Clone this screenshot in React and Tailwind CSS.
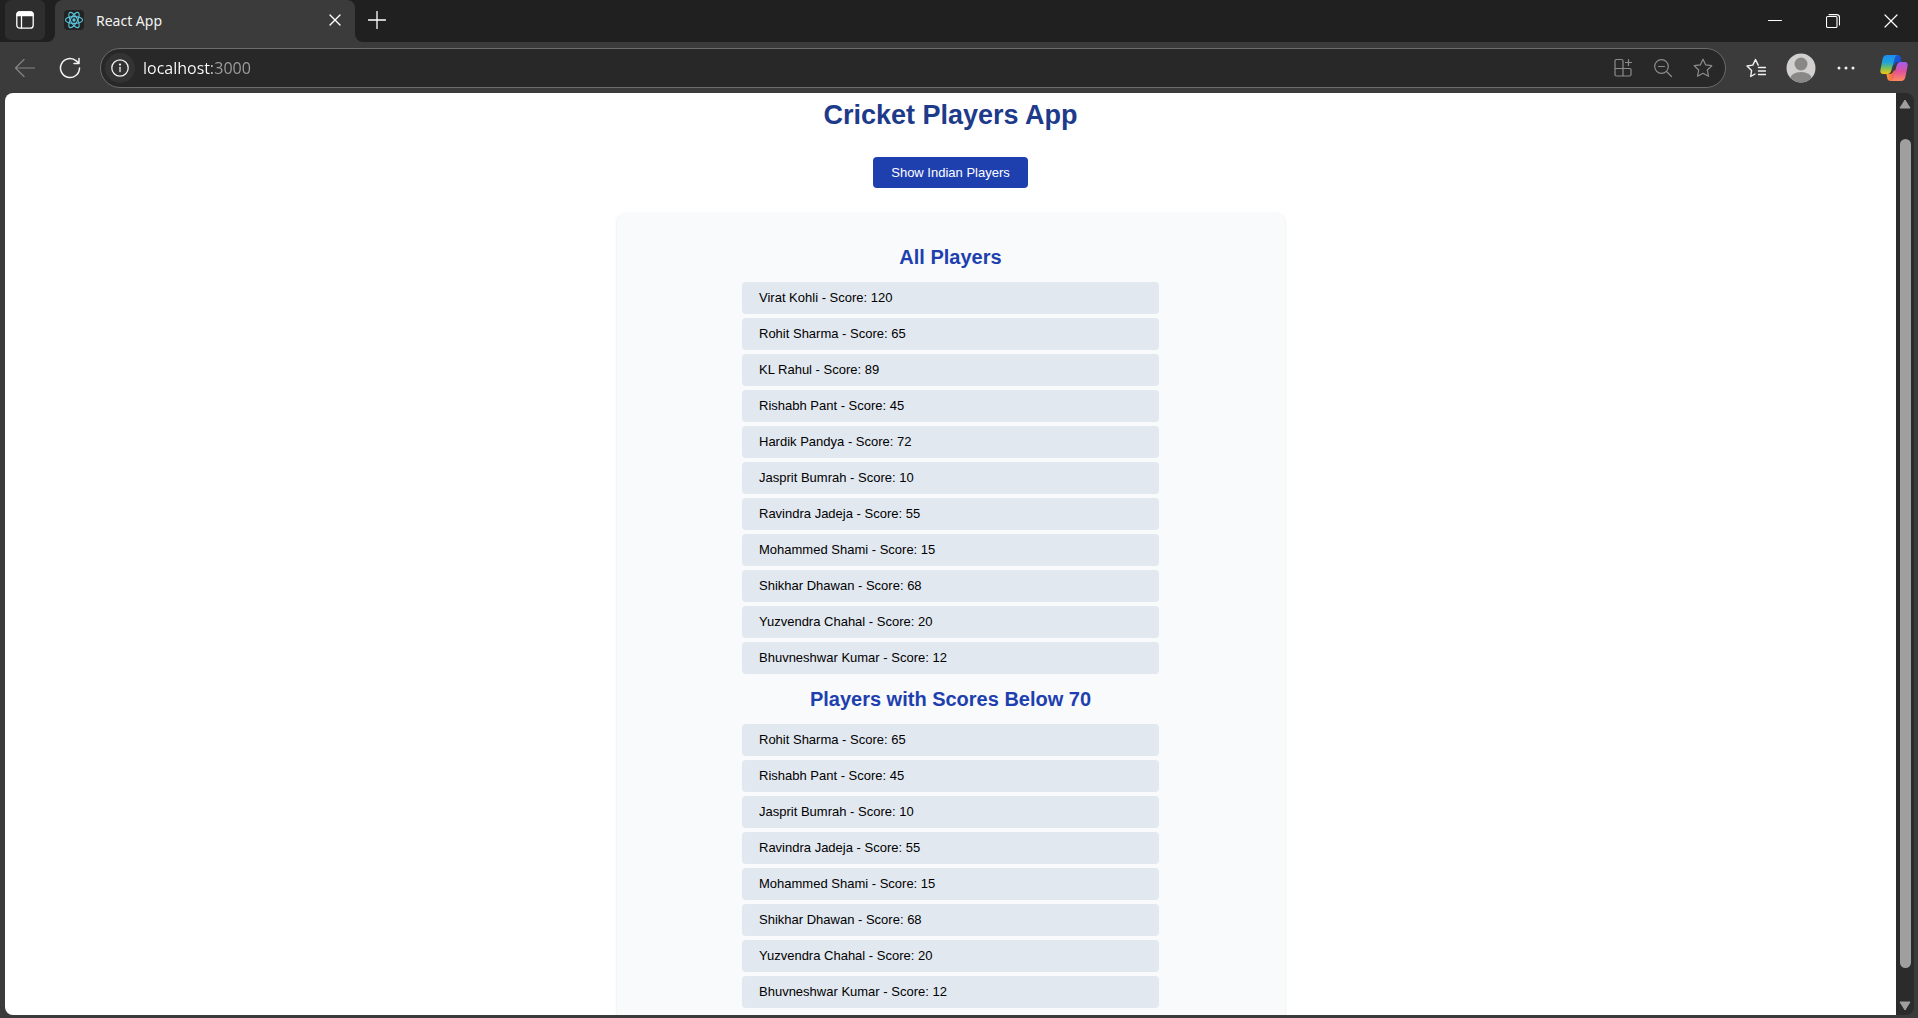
import React from "react";

const players = [
  ["Virat Kohli", 120],
  ["Rohit Sharma", 65],
  ["KL Rahul", 89],
  ["Rishabh Pant", 45],
  ["Hardik Pandya", 72],
  ["Jasprit Bumrah", 10],
  ["Ravindra Jadeja", 55],
  ["Mohammed Shami", 15],
  ["Shikhar Dhawan", 68],
  ["Yuzvendra Chahal", 20],
  ["Bhuvneshwar Kumar", 12],
];

function Icon({ size = 20, sw = 1.2, box = 20, className = "", children }) {
  return (
    <svg
      width={size}
      height={size}
      viewBox={`0 0 ${box} ${box}`}
      fill="none"
      stroke="currentColor"
      strokeWidth={sw}
      strokeLinecap="round"
      strokeLinejoin="round"
      className={`shrink-0 ${className}`}
      aria-hidden="true"
    >
      {children}
    </svg>
  );
}

function ReactLogo() {
  return (
    <svg width="20" height="20" viewBox="0 0 20 20" fill="none" stroke="#58c4dc" strokeWidth="1.1" className="shrink-0 rounded-sm bg-[#222]" aria-hidden="true">
      <ellipse cx="10" cy="10" rx="8.6" ry="3.4" />
      <ellipse cx="10" cy="10" rx="8.6" ry="3.4" transform="rotate(60 10 10)" />
      <ellipse cx="10" cy="10" rx="8.6" ry="3.4" transform="rotate(120 10 10)" />
      <circle cx="10" cy="10" r="1.7" fill="#58c4dc" stroke="none" />
    </svg>
  );
}

function CopilotLogo() {
  return (
    <svg width="28" height="28" viewBox="0 0 28 28" aria-hidden="true">
      <defs>
        <linearGradient id="cpLeft" x1="0" y1="0" x2="0" y2="1">
          <stop offset="0" stopColor="#1b8df0" />
          <stop offset="0.4" stopColor="#1fa3d8" />
          <stop offset="0.7" stopColor="#7cc255" />
          <stop offset="1" stopColor="#f6c514" />
        </linearGradient>
        <linearGradient id="cpRight" x1="0" y1="0" x2="0" y2="1">
          <stop offset="0" stopColor="#a35cf2" />
          <stop offset="0.5" stopColor="#e0529c" />
          <stop offset="1" stopColor="#ff8a5c" />
        </linearGradient>
        <linearGradient id="cpTop" x1="0" y1="0" x2="1" y2="1">
          <stop offset="0" stopColor="#1a5fe0" />
          <stop offset="1" stopColor="#1846c8" />
        </linearGradient>
        <linearGradient id="cpBottom" x1="0" y1="0" x2="1" y2="0">
          <stop offset="0" stopColor="#f79a3b" />
          <stop offset="1" stopColor="#f0504e" />
        </linearGradient>
      </defs>
      <path d="M12.500 1h5c2 0 2.800 1 3.200 2.800L21.600 8h-3.200c-2.200 0-3.300 1-3.900 3L12 12z" fill="url(#cpTop)" />
      <path d="M15.500 27h-5c-2 0-2.800-1-3.200-2.800L6.400 20h3.200c2.200 0 3.300-1 3.900-3l2.500-1z" fill="url(#cpBottom)" />
      <path d="M7 1h10.500c-1.600 0.300-2.300 1.500-2.700 3.100L11.300 16.500c-0.700 2.300-1.700 3.500-4.100 3.500H3.600C0.700 20 0 18.300 0.500 15.500L2.600 5C3.200 2.200 4.500 1 7 1z" fill="url(#cpLeft)" />
      <path d="M21 27H10.500c1.600-0.300 2.300-1.500 2.700-3.100l3.500-12.400C17.400 9.200 18.400 8 20.800 8h3.600c2.900 0 3.600 1.700 3.100 4.500L25.400 23c-0.600 2.800-1.900 4-4.400 4z" fill="url(#cpRight)" />
    </svg>
  );
}

function TitleBar() {
  return (
    <header className="flex h-[42px] shrink-0 items-stretch bg-[#202020] text-white">
      <button aria-label="Tab actions" className="ml-[5px] flex h-10 w-10 items-center justify-center rounded-md bg-[#2e2e2e]">
        <Icon size={20} sw={1.3}>
          <rect x="1.800" y="1.800" width="16.400" height="16.400" rx="3" />
          <path d="M2 4.500a2.500 2.500 0 0 1 2.500-2.500h11a2.500 2.500 0 0 1 2.500 2.500V5.500H2z" fill="currentColor" />
          <path d="M6.500 6v12" />
        </Icon>
      </button>
      <div className="flex w-[10px] items-end bg-[#3b3b3b]">
        <div className="h-full w-full rounded-br-lg bg-[#202020]" />
      </div>
      <div className="flex w-[300px] items-center rounded-t-lg bg-[#3b3b3b] pr-2 pb-[2px] pl-[9px]">
        <ReactLogo />
        <span className="ml-3 flex-1 font-['Noto_Sans',sans-serif] text-[14px] text-[#f2f2f2]">React App</span>
        <button aria-label="Close tab" className="flex h-6 w-6 items-center justify-center">
          <Icon size={12} box={12} sw={1.4}>
            <path d="M1 1l10 10M11 1L1 11" />
          </Icon>
        </button>
      </div>
      <div className="flex w-[10px] bg-[#3b3b3b]">
        <div className="h-full w-full rounded-bl-lg bg-[#202020]" />
      </div>
      <button aria-label="New tab" className="flex h-10 w-6 items-center justify-center">
        <Icon size={18} box={18} sw={1.3}>
          <path d="M9 0.500v17M0.500 9h17" />
        </Icon>
      </button>
      <div className="-mr-[2px] ml-auto flex">
        <button aria-label="Minimize" className="flex w-[58px] items-center justify-center">
          <Icon size={14} box={14} sw={1}>
            <path d="M0.500 6.500h13" />
          </Icon>
        </button>
        <button aria-label="Restore" className="flex w-[58px] items-center justify-center">
          <Icon size={14} box={14} sw={1.1}>
            <rect x="0.500" y="2.500" width="10.500" height="11" rx="1.200" />
            <path d="M3 0.600h7.500a3 3 0 0 1 3 3V11" />
          </Icon>
        </button>
        <button aria-label="Close" className="flex w-[58px] items-center justify-center">
          <Icon size={14} box={14} sw={1.2}>
            <path d="M1 1l12 12M13 1L1 13" />
          </Icon>
        </button>
      </div>
    </header>
  );
}

const STAR = "M10 1.200l2.700 5.700 6.100 0.800-4.500 4.300 1.200 6.300L10 15.300l-5.500 3 1.200-6.300L1.200 7.700l6.100-0.800z";

function Toolbar() {
  return (
    <div className="flex h-[51px] shrink-0 items-center bg-[#3b3b3b] pr-[10px] pl-[14px] text-[#f2f2f2]">
      <button aria-label="Back" className="text-[#858585]">
        <Icon size={22} box={22} sw={1.200}>
          <path d="M20.500 11H1.500M10 2.500L1.500 11l8.500 8.500" />
        </Icon>
      </button>
      <button aria-label="Refresh" className="ml-[23px]">
        <Icon size={22} box={22} sw={1.500}>
          <path d="M20.500 11a9.500 9.500 0 1 1-3.200-7.100L20 6.500M20 1.500v5h-5" />
        </Icon>
      </button>
      <div className="ml-[19px] flex h-10 flex-1 items-center rounded-full border border-[#6b6b6b] bg-[#282828] pr-3 pl-1">
        <button aria-label="View site information" className="flex h-[30px] w-[30px] items-center justify-center rounded-full bg-[#333]">
          <Icon size={18} box={18} sw={1.300}>
            <circle cx="9" cy="9" r="8.200" />
            <path d="M9 8.300v4.200" />
            <circle cx="9" cy="5.600" r="0.500" fill="currentColor" />
          </Icon>
        </button>
        <input
          type="text"
          aria-label="Address"
          defaultValue="localhost:3000"
          className="ml-2 h-8 min-w-0 flex-1 bg-[linear-gradient(to_right,#ffffff_69px,#a0a0a0_69px)] bg-clip-text font-['Open_Sans',sans-serif] text-[16px] text-transparent outline-none"
        />
        <div className="flex gap-5 text-[#8c8c8c]">
          <button aria-label="App available">
            <Icon>
              <path d="M10 10.500V3a1.500 1.500 0 0 0-1.500-1.500h-5A1.500 1.500 0 0 0 2 3v13.500A1.500 1.500 0 0 0 3.500 18h13a1.500 1.500 0 0 0 1.500-1.500v-5a1 1 0 0 0-1-1H2M10 10.500V18M15.500 1.500v6M12.500 4.500h6" />
            </Icon>
          </button>
          <button aria-label="Zoom out">
            <Icon>
              <circle cx="8.500" cy="8.500" r="6.800" />
              <path d="M13.500 13.500l5 5M5.500 8.500h6" />
            </Icon>
          </button>
          <button aria-label="Add to favorites">
            <Icon>
              <path d={STAR} />
            </Icon>
          </button>
        </div>
      </div>
      <button aria-label="Favorites" className="ml-5">
        <Icon sw={1.400}>
          <path d="M9 16l-4.300 2.500 0.900-6L1 8l5.800-0.900L9.500 1.500l2.700 5.600M12.500 9.500h7M12.500 13h7M12.500 16.500h7" />
        </Icon>
      </button>
      <button aria-label="Profile" className="ml-5">
        <svg width="30" height="30" viewBox="0 0 30 30" aria-hidden="true">
          <clipPath id="avatarClip"><circle cx="15" cy="15" r="14.500" /></clipPath>
          <circle cx="15" cy="15" r="14.500" fill="#d2d0ce" />
          <g clipPath="url(#avatarClip)" fill="#8a8886">
            <circle cx="15" cy="11" r="6.500" />
            <ellipse cx="15" cy="26" rx="11" ry="7" />
          </g>
        </svg>
      </button>
      <button aria-label="Settings and more" className="ml-5">
        <svg width="20" height="20" viewBox="0 0 20 20" fill="currentColor" aria-hidden="true">
          <circle cx="3" cy="10" r="1.500" />
          <circle cx="10" cy="10" r="1.500" />
          <circle cx="17" cy="10" r="1.500" />
        </svg>
      </button>
      <button aria-label="Copilot" className="ml-6">
        <CopilotLogo />
      </button>
    </div>
  );
}

function PlayerList({ title, items }) {
  return (
    <section>
      <h2 className="text-center text-[20px] leading-6 font-bold text-[#1e40af]">{title}</h2>
      <ul className="mx-auto mt-[13px] flex w-[417px] flex-col gap-1">
        {items.map(([name, score]) => (
          <li key={name} className="rounded bg-[#e2e8f0] px-[17px] py-2 text-[13px] leading-4 text-black">
            {name} - Score: {score}
          </li>
        ))}
      </ul>
    </section>
  );
}

function ScrollBar() {
  return (
    <div className="flex w-[18px] shrink-0 flex-col items-center rounded-r-lg bg-[#2b2b2b] pt-[6px] pb-1 text-[#9f9f9f]" aria-hidden="true">
      <svg width="12" height="10" viewBox="0 0 12 10" fill="currentColor" stroke="currentColor" strokeLinejoin="round">
        <path d="M6 1l5 8H1z" />
      </svg>
      <div className="mt-[30px] mb-[33px] w-[11px] flex-1 rounded-full bg-[#9f9f9f]" />
      <svg width="12" height="10" viewBox="0 0 12 10" fill="currentColor" stroke="currentColor" strokeLinejoin="round">
        <path d="M6 9l5-8H1z" />
      </svg>
    </div>
  );
}

export default function App() {
  return (
    <div className="flex h-screen flex-col bg-[#3b3b3b] font-['Liberation_Sans',Arial,sans-serif]">
      <TitleBar />
      <Toolbar />
      <div className="mr-1 mb-[3px] ml-[5px] flex min-h-0 flex-1">
        <main className="min-w-0 flex-1 overflow-hidden rounded-l-lg bg-white">
          <div className="flex flex-col items-center">
            <h1 className="mt-[6px] text-[27px] leading-8 font-bold text-[#1e3a8a]">Cricket Players App</h1>
            <button className="mt-[26px] rounded bg-[#1e40af] px-[18px] pt-2 pb-[7px] text-[13px] leading-4 font-medium text-white">
              Show Indian Players
            </button>
            <div className="mt-[25px] flex w-full max-w-[668px] flex-col gap-[13px] rounded-lg bg-[#f8fafc] px-6 pt-8 pb-12 shadow-sm">
              <PlayerList title="All Players" items={players} />
              <PlayerList title="Players with Scores Below 70" items={players.filter(([, score]) => score < 70)} />
            </div>
          </div>
        </main>
        <ScrollBar />
      </div>
    </div>
  );
}
